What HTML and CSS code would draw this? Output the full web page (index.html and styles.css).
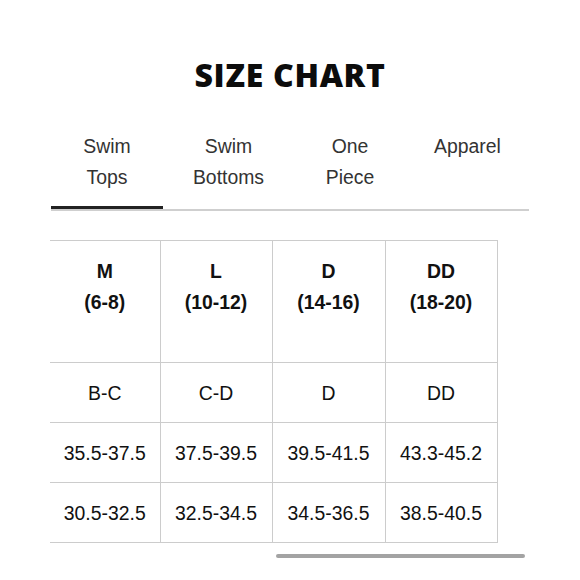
FILE: index.html
```html
<!DOCTYPE html>
<html>
<head>
<meta charset="utf-8">
<link rel="stylesheet" href="styles.css">
</head>
<body>
<h1 class="title">SIZE CHART</h1>
<div class="tabs">
  <div class="tab active">Swim<br>Tops</div>
  <div class="tab">Swim<br>Bottoms</div>
  <div class="tab">One<br>Piece</div>
  <div class="tab">Apparel</div>
</div>
<div class="table-wrap">
  <table class="chart">
    <colgroup>
      <col class="c1"><col class="c2"><col class="c3"><col class="c4">
    </colgroup>
    <tr class="head">
      <th>M<br>(6-8)</th>
      <th>L<br>(10-12)</th>
      <th>D<br>(14-16)</th>
      <th>DD<br>(18-20)</th>
    </tr>
    <tr>
      <td>B-C</td><td>C-D</td><td>D</td><td>DD</td>
    </tr>
    <tr>
      <td>35.5-37.5</td><td>37.5-39.5</td><td>39.5-41.5</td><td>43.3-45.2</td>
    </tr>
    <tr>
      <td>30.5-32.5</td><td>32.5-34.5</td><td>34.5-36.5</td><td>38.5-40.5</td>
    </tr>
  </table>
  <div class="scrollbar"></div>
</div>
</body>
</html>
```
FILE: styles.css
```css
html, body {
  margin: 0;
  padding: 0;
  background: #ffffff;
}
body {
  font-family: "Liberation Sans", Arial, sans-serif;
  color: #111;
}
.title {
  margin: 55px 0 0;
  height: 40px;
  line-height: 40px;
  text-align: center;
  font-family: "Open Sans", sans-serif;
  font-weight: 800;
  font-size: 32px;
  letter-spacing: 0.7px;
  color: #0c0c0c;
}
.tabs {
  display: grid;
  grid-template-columns: 112px 131px 112px 123px;
  margin: 36px 0 0 51px;
  width: 478px;
  border-bottom: 2px solid #cfcfcf;
}
.tab {
  padding: 0 0 13px;
  text-align: center;
  font-size: 19.4px;
  line-height: 31px;
  color: #333;
  border-bottom: 3px solid transparent;
}
.tab.active {
  border-bottom-color: #222;
}
.table-wrap {
  margin: 29px 0 0 50px;
}
.chart {
  border-collapse: collapse;
  table-layout: fixed;
  width: 447px;
  font-size: 19.4px;
  color: #111;
}
.c1 { width: 110px; }
.c2 { width: 112px; }
.c3 { width: 113px; }
.c4 { width: 112px; }
.chart th, .chart td {
  border: 1px solid #cccccc;
  text-align: center;
  padding: 0;
}
.chart th:first-child, .chart td:first-child {
  border-left: none;
}
.chart th {
  font-weight: bold;
  line-height: 31px;
  vertical-align: top;
  padding: 15px 0 44px;
}
.chart td {
  height: 59px;
  line-height: 20px;
  vertical-align: middle;
  font-weight: normal;
}
.scrollbar {
  margin: 11px 0 0 226px;
  width: 249px;
  height: 4px;
  border-radius: 2px;
  background: #a3a3a3;
}
```
